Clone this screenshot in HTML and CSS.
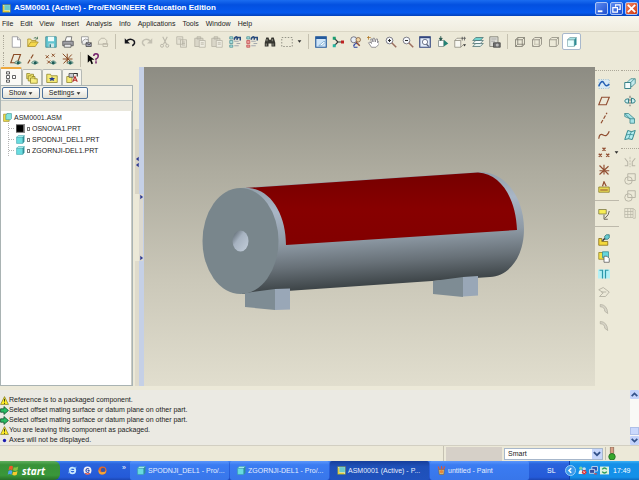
FILE: index.html
```html
<!DOCTYPE html>
<html lang="en">
<head>
    <meta charset="UTF-8">
    <meta name="viewport" content="width=device-width, initial-scale=1.0">
    <title>ASM0001 (Active) - Pro/ENGINEER Education Edition</title>
    <link rel="stylesheet" href="styles.css">
</head>
<body>
    <!-- icon sprite -->
    <svg class="sprite" aria-hidden="true">
        <symbol id="app" viewBox="0 0 16 16"><path d="M1 1h14v14H1z" fill="#e9f2c9" stroke="#4d6b48"/><path d="M4 2h10v9H4z" fill="#69c9cb"/><path d="M3 3v10h10" fill="none" stroke="#e2c832" stroke-width="2"/></symbol>
        <symbol id="new" viewBox="0 0 16 16"><path d="M3 1h7l4 4v10H3z" fill="#fff" stroke="#8d8d93"/><path d="M10 1v4h4" fill="#ddd" stroke="#8d8d93"/></symbol>
        <symbol id="open" viewBox="0 0 16 16"><path d="M1 14V4h4l1 2h6v3" fill="#f7e37c" stroke="#a58b24"/><path d="M1 14l4-6h10l-4 6z" fill="#f5d84c" stroke="#a58b24"/><path d="M9 3q3-3 5 1M14 1v3h-3" fill="none" stroke="#3e6e50"/></symbol>
        <symbol id="save" viewBox="0 0 16 16"><path d="M1 1h14v14H1z" fill="#63c5d0" stroke="#35808a"/><path d="M4 1h8v6H4z" fill="#eefcfc"/><path d="M5 10h7v5H5z" fill="#d3e7e8"/><path d="M6 11h2v4H6z" fill="#35808a"/></symbol>
        <symbol id="print" viewBox="0 0 16 16"><path d="M4 7l2-6h7l-1 6" fill="#fff" stroke="#555"/><path d="M1 7h14v6H1z" fill="#a0a0a6" stroke="#4c4c52"/><path d="M3 11h9v4H3z" fill="#e6e6e6" stroke="#555"/></symbol>
        <symbol id="mail" viewBox="0 0 16 16"><path d="M2 1h9v8H2z" fill="#fff" stroke="#888"/><path d="M3 7q4-5 8-2v6H3z" fill="#eee" stroke="#888"/><path d="M8 9h7v5H8z" fill="#a8a8bb" stroke="#444"/><path d="M8 9l4 3 3-3" fill="none" stroke="#444"/></symbol>
        <symbol id="mailoff" viewBox="0 0 16 16"><path d="M2 11V7q3-6 8-4l3 3v4M1 11h14M8 10h6v4H8z" fill="none" stroke="#bdb9aa" stroke-width="1.3"/></symbol>
        <symbol id="undo" viewBox="0 0 16 16"><path d="M3 7q5-5 10-1q3 4-2 7" fill="none" stroke="#15151c" stroke-width="2"/><path d="M1 3v7h7z" fill="#15151c"/></symbol>
        <symbol id="redo" viewBox="0 0 16 16"><path d="M13 7q-5-5-10-1q-3 4 2 7" fill="none" stroke="#c3c0b2" stroke-width="2"/><path d="M15 3v7H8z" fill="#c3c0b2"/></symbol>
        <symbol id="cut" viewBox="0 0 16 16"><path d="M5 1l5 10M11 1L6 11" stroke="#bab7aa" stroke-width="1.4"/><circle cx="4" cy="13" r="2" fill="none" stroke="#bab7aa" stroke-width="1.3"/><circle cx="11" cy="13" r="2" fill="none" stroke="#bab7aa" stroke-width="1.3"/></symbol>
        <symbol id="copy" viewBox="0 0 16 16"><path d="M1 1h8v10H1zM6 5h8v10H6z" fill="#e5e2d4" stroke="#b3b0a3"/><path d="M8 8h4M8 10h4M8 12h4M3 4h4" stroke="#b3b0a3"/></symbol>
        <symbol id="paste" viewBox="0 0 16 16"><path d="M1 3h11v11H1zM4 1h5v3H4z" fill="#d9d6c8" stroke="#b3b0a3"/><path d="M7 6h8v9H7z" fill="#efede2" stroke="#b3b0a3"/><path d="M9 9h4M9 11h4" stroke="#b3b0a3"/></symbol>
        <symbol id="regen" viewBox="0 0 16 16"><path d="M1 1h4v3H1zM1 6h4v4H1zM1 12h4v3H1z" fill="#a9dfdd" stroke="#4f9094"/><path d="M7 6q0-4 3-4v3l3-3M10 10h5M7 7h6M7 13h6" fill="none" stroke="#8b93a0"/><path d="M7 5q0-4 4-4M11 5V1M12 2h3v4" fill="none" stroke="#26497c" stroke-width="2"/></symbol>
        <symbol id="regenred" viewBox="0 0 16 16"><path d="M1 1h4v3H1z" fill="#a9dfdd" stroke="#4f9094"/><path d="M1 6h4v4H1zM1 12h4v3H1z" fill="#ee9c9c" stroke="#c25252"/><path d="M10 10h5M7 7h6M7 13h6" fill="none" stroke="#8b93a0"/><path d="M7 5q0-4 4-4M11 5V1M12 2h3v4" fill="none" stroke="#26497c" stroke-width="2"/></symbol>
        <symbol id="find" viewBox="0 0 16 16"><path d="M3 2h3l1 3h2l1-3h3l2 7v5h-5v-4H6v4H1V9z" fill="#35352f"/><path d="M3 10v3M12 10v3M4 4v3M11 4v3" stroke="#b5b5aa"/></symbol>
        <symbol id="selbox" viewBox="0 0 16 16"><path d="M1 2h14v12H1z" fill="none" stroke="#77756c" stroke-dasharray="2 2"/></symbol>
        <symbol id="repaint" viewBox="0 0 16 16"><path d="M1 1h14v14H1z" fill="#cfe5f8" stroke="#245a9c" stroke-width="1.5"/><path d="M1 1h14v3H1z" fill="#245a9c"/><path d="M5 13l7-6 2 1-5 5z" fill="#fff" stroke="#6ea4cd"/></symbol>
        <symbol id="spin" viewBox="0 0 16 16"><path d="M3 3l5 5-5 5M8 8h5" fill="none" stroke="#343434" stroke-width="1.5"/><path d="M1 1h4v4H1z" fill="#1b9e70"/><path d="M1 11h4v4H1z" fill="#25b5a0"/><path d="M12 6h4v4h-4z" fill="#bd2222"/></symbol>
        <symbol id="orient" viewBox="0 0 16 16"><circle cx="5" cy="5" r="4" fill="#e7eef5" stroke="#57576a"/><circle cx="11" cy="5" r="3" fill="#f1d4a2" stroke="#77553c"/><path d="M8 8l5 5" stroke="#8f4b35" stroke-width="2"/><path d="M5 14q0-4 4-4M5 15h5" fill="none" stroke="#2741a6" stroke-width="1.6"/></symbol>
        <symbol id="pan" viewBox="0 0 16 16"><path d="M6 15L2 9l2-1 2 2-1-6 2 0 1 4 0-5h2l1 5 1-4 2 0v5l2-2v4l-4 4z" fill="#fff" stroke="#77757c"/><path d="M0 2h5M2 0v5" stroke="#b07420"/></symbol>
        <symbol id="zoomin" viewBox="0 0 16 16"><circle cx="6" cy="6" r="4.5" fill="#f4f7fb" stroke="#5d5d6d"/><path d="M9 9l6 6" stroke="#9b6f5e" stroke-width="2"/><path d="M4 6h4M6 4v4" stroke="#222" stroke-width="1.3"/></symbol>
        <symbol id="zoomout" viewBox="0 0 16 16"><circle cx="6" cy="6" r="4.5" fill="#f4f7fb" stroke="#5d5d6d"/><path d="M9 9l6 6" stroke="#9b6f5e" stroke-width="2"/><path d="M4 6h4" stroke="#222" stroke-width="1.3"/></symbol>
        <symbol id="refit" viewBox="0 0 16 16"><path d="M1 1h14v14H1z" fill="#e4edf8" stroke="#33467d" stroke-width="1.5"/><path d="M1 1h14v2H1z" fill="#33467d"/><circle cx="8" cy="8" r="3.5" fill="#fff" stroke="#4d5670"/><path d="M10 11l3 3" stroke="#4d5670" stroke-width="1.5"/></symbol>
        <symbol id="reorient" viewBox="0 0 16 16"><path d="M2 6h7v8H2z" fill="#f8fbfb" stroke="#7b8784"/><path d="M5 0v6M3 3l2 3 2-3z" stroke="#24544c" fill="#24544c"/><path d="M9 5l6 5-6 4z" fill="#238174"/></symbol>
        <symbol id="views" viewBox="0 0 16 16"><path d="M1 6h8v9H1zM1 6l3-3h8M9 15l3-3" fill="#f8f8f2" stroke="#8a8779"/><path d="M11 1v5M14 1v5M10 3h6" stroke="#555"/><path d="M12 11h4l-2 3z" fill="#333"/></symbol>
        <symbol id="layers" viewBox="0 0 16 16"><path d="M1 14l4-4h10l-4 4z" fill="#e6f3f0" stroke="#4a6f70"/><path d="M1 10l4-4h10l-4 4z" fill="#f8fbfb" stroke="#4a6f70"/><path d="M1 6l4-4h10l-4 4z" fill="#72d3cf" stroke="#4a6f70"/></symbol>
        <symbol id="viewmgr" viewBox="0 0 16 16"><path d="M1 1h11v13H1z" fill="#dcdcd5" stroke="#77776c"/><path d="M3 4h7M3 7h5" stroke="#999"/><path d="M6 9h9v6H6z" fill="#707070" stroke="#444"/><circle cx="11" cy="12" r="2" fill="#bbb"/></symbol>
        <symbol id="wire" viewBox="0 0 16 16"><path d="M2 5h9v9H2zM5 2h9v9H5zM2 5l3-3M11 5l3-3M2 14l3-3M11 14l3-3" fill="none" stroke="#77746a"/></symbol>
        <symbol id="hidden" viewBox="0 0 16 16"><path d="M2 5h9v9H2zM2 5l3-3h9v9l-3 3M11 5l3-3" fill="none" stroke="#817e74"/><path d="M5 4v7h7M2 14l3-3" fill="none" stroke="#b9b5a8"/></symbol>
        <symbol id="nohidden" viewBox="0 0 16 16"><path d="M2 5h9v9H2zM2 5l3-3h9v9l-3 3M11 5l3-3" fill="none" stroke="#8c897e"/></symbol>
        <symbol id="shade" viewBox="0 0 16 16"><path d="M2 5h9v9H2z" fill="#e8ffff" stroke="#8eb0b6"/><path d="M2 5l3-3h9l-3 3z" fill="#a9e4e6" stroke="#79a3a8"/><path d="M11 5l3-3v9l-3 3z" fill="#2d8c93"/></symbol>
        <symbol id="part" viewBox="0 0 16 16"><path d="M1 4h11v11H1z" fill="#68dce0" stroke="#3aa0a8"/><path d="M1 4l3-3h11l-3 3z" fill="#b9f7f7" stroke="#3aa0a8"/><path d="M12 4l3-3v11l-3 3z" fill="#2e929a"/></symbol>
        <symbol id="partblack" viewBox="0 0 16 16"><path d="M0 0h16v16H0z" fill="#8b8b8b"/><path d="M1 2h12v12H1z" fill="#000"/></symbol>
        <symbol id="assembly" viewBox="0 0 16 16"><path d="M1 2h10v13H1z" fill="#f3dd45" stroke="#8d7f21"/><path d="M5 4l2-3h8v9l-2 2H5z" fill="#85e4dd" stroke="#348a8e"/></symbol>
        <symbol id="dplane" viewBox="0 0 16 16"><path d="M1 13L5 2h9l-4 11z" fill="none" stroke="#8a4b25" stroke-width="1.5"/><path d="M6 13q4-5 9 0q-5 4-9 0" fill="#c5dfd5" stroke="#40776a"/><circle cx="11" cy="13" r="2" fill="#1c5a55"/></symbol>
        <symbol id="daxis" viewBox="0 0 16 16"><path d="M1 14L9 1" stroke="#8a4b25" stroke-width="1.5" stroke-dasharray="6 2"/><path d="M6 13q4-5 9 0q-5 4-9 0" fill="#c5dfd5" stroke="#40776a"/><circle cx="11" cy="13" r="2" fill="#1c5a55"/></symbol>
        <symbol id="dpoint" viewBox="0 0 16 16"><path d="M1 3l4 4M5 3L1 7M9 1l4 4M13 1L9 5M3 10l4 4M7 10l-4 4" stroke="#8a4b25" stroke-width="1.3"/><path d="M7 13q4-5 8 0q-4 4-8 0" fill="#c5dfd5" stroke="#40776a"/><circle cx="11" cy="13" r="2" fill="#1c5a55"/></symbol>
        <symbol id="dcsys" viewBox="0 0 16 16"><path d="M1 1l12 12M13 2L2 14M7 1v13M1 8h13" stroke="#8a4b25" stroke-width="1.3"/><path d="M7 13q4-5 8 0q-4 4-8 0" fill="#c5dfd5" stroke="#40776a"/><circle cx="11" cy="13" r="2" fill="#1c5a55"/></symbol>
        <symbol id="help" viewBox="0 0 16 16"><path d="M1 2v11l3-3 2 5 2-1-2-5h4z" fill="#000"/><path d="M9 4q0-3 3-3t3 3-3 4v2M12 11v3" fill="none" stroke="#74206d" stroke-width="2"/></symbol>
        <symbol id="tree" viewBox="0 0 16 16"><path d="M2 1h4v3H2zM2 6h4v4H2zM2 12h4v3H2zM10 6h4v4h-4z" fill="#fff" stroke="#333"/></symbol>
        <symbol id="folders" viewBox="0 0 16 16"><path d="M1 2h4l1 1h4v6H1z" fill="#efe36a" stroke="#8c8128"/><path d="M3 5h4l1 1h4v6H3z" fill="#efe36a" stroke="#8c8128"/><path d="M6 8h4l1 1h4v6H6z" fill="#f6ed82" stroke="#8c8128"/></symbol>
        <symbol id="favorite" viewBox="0 0 16 16"><path d="M1 3h5l1 2h8v9H1z" fill="#f5ea76" stroke="#8c8128"/><path d="M8 6l1 2h3l-2 2 1 2-3-1-3 1 1-2-2-2h3z" fill="#223a91"/></symbol>
        <symbol id="connect" viewBox="0 0 16 16"><path d="M1 6h7v8H1z" fill="#f5ea76" stroke="#8c8128"/><path d="M4 2h6v5H4z" fill="#c9ccd4" stroke="#444"/><path d="M9 13l3-7 3 7M10 11h4" fill="none" stroke="#b32323" stroke-width="1.4"/><path d="M10 2h5v4" fill="none" stroke="#333" stroke-width="1.5"/></symbol>
        <symbol id="sketch" viewBox="0 0 16 16"><path d="M1 2h14v12H1z" fill="#d7e9f4" stroke="#7da9c8" stroke-dasharray="1 2"/><path d="M1 11q4-10 7-4t7 1" fill="none" stroke="#2460b4" stroke-width="2"/></symbol>
        <symbol id="plane" viewBox="0 0 16 16"><path d="M1 13L5 3h10l-4 10z" fill="none" stroke="#914e31" stroke-width="1.5"/></symbol>
        <symbol id="axis" viewBox="0 0 16 16"><path d="M4 15L12 1" stroke="#914e31" stroke-width="1.6" stroke-dasharray="5 2"/></symbol>
        <symbol id="curve" viewBox="0 0 16 16"><path d="M1 13q1-8 6-5t8-5" fill="none" stroke="#914e31" stroke-width="1.6"/></symbol>
        <symbol id="points" viewBox="0 0 16 16"><path d="M6 1l4 4M10 1L6 5M1 9l4 4M5 9l-4 4M11 9l4 4M15 9l-4 4" stroke="#914e31" stroke-width="1.8"/></symbol>
        <symbol id="csys" viewBox="0 0 16 16"><path d="M2 2l12 12M14 3L2 14M8 1v13M2 9h13" stroke="#914e31" stroke-width="1.5"/></symbol>
        <symbol id="analysis" viewBox="0 0 16 16"><path d="M1 8h14v7H1z" fill="#e7d956" stroke="#86792a"/><path d="M6 7l2-6 3 6M3 12h10" fill="none" stroke="#914e31" stroke-width="1.6"/></symbol>
        <symbol id="note" viewBox="0 0 16 16"><path d="M1 2h10v6H1z" fill="#f7ed55" stroke="#777442"/><path d="M15 4q0 5-6 10M8 9v6h5" fill="none" stroke="#6a6557" stroke-width="1.3"/></symbol>
        <symbol id="assemble" viewBox="0 0 16 16"><path d="M1 6h4v4h8v5H1z" fill="#f4d83a" stroke="#806713"/><path d="M9 3l2-2h4v4l-2 2H9z" fill="#69cbd0" stroke="#2a7278"/><path d="M6 9l3-3" stroke="#333" stroke-width="2"/></symbol>
        <symbol id="create" viewBox="0 0 16 16"><path d="M1 2h9v9H1z" fill="#f4df45" stroke="#8b7d25"/><path d="M6 1h8v8H6z" fill="#66d6dc" stroke="#358d95"/><path d="M8 7h4l3 3v5H8z" fill="#fff" stroke="#555"/></symbol>
        <symbol id="hole" viewBox="0 0 16 16"><path d="M0 2h16v12H0z" fill="#b4f0f5"/><path d="M2 3h4v11M14 3h-4v11" fill="none" stroke="#2a98aa" stroke-width="1.6"/></symbol>
        <symbol id="shell" viewBox="0 0 16 16"><path d="M1 5l6-3 8 6-5 6H2l5-5zM4 8h7" fill="none" stroke="#b8b5a7" stroke-width="1.3"/></symbol>
        <symbol id="round" viewBox="0 0 16 16"><path d="M3 2q9 0 10 12l-4-3Q9 5 3 5z" fill="#d8d5c8" stroke="#b0ad9f"/></symbol>
        <symbol id="extrude" viewBox="0 0 16 16"><path d="M5 5l4-4h6v6l-5 5z" fill="#c4eaec" stroke="#338086"/><path d="M1 6h8v8H1z" fill="#f4fbfb" stroke="#338086" stroke-width="1.3"/><path d="M9 6l5-5" stroke="#338086"/></symbol>
        <symbol id="revolve" viewBox="0 0 16 16"><path d="M8 1v14" stroke="#444" stroke-dasharray="3 1"/><path d="M6 5Q1 5 1 8t5 3zM10 4q5 1 5 4t-5 3z" fill="#cdeff1" stroke="#338086" stroke-width="1.3"/></symbol>
        <symbol id="blend" viewBox="0 0 16 16"><path d="M1 2h5l8 7v6H8V9L1 6z" fill="#a4e2e6" stroke="#338086"/><path d="M8 9h6M1 2l7 7" stroke="#338086"/></symbol>
        <symbol id="boundary" viewBox="0 0 16 16"><path d="M5 2q5 3 10 0l-4 12q-5-2-10 0z" fill="#b2edf0" stroke="#31878d" stroke-width="1.3"/><path d="M10 3L6 13M3 8q5-2 10 0" fill="none" stroke="#31878d"/></symbol>
        <symbol id="mirror" viewBox="0 0 16 16"><path d="M8 1v14" stroke="#b8b5a7" stroke-dasharray="3 1"/><path d="M1 3l4 5v5H1M15 3l-4 5v5h4" fill="none" stroke="#b8b5a7" stroke-width="1.4"/></symbol>
        <symbol id="merge" viewBox="0 0 16 16"><path d="M5 1h10v9H5z" fill="none" stroke="#b8b5a7" stroke-width="1.3"/><circle cx="6" cy="10" r="5" fill="none" stroke="#b8b5a7" stroke-width="1.3"/></symbol>
        <symbol id="pattern" viewBox="0 0 16 16"><path d="M1 2h11v12H1zM1 6h11M1 10h11M5 2v12M9 2v12M12 2l3 2v11h-3" fill="none" stroke="#b8b5a7"/></symbol>
        <symbol id="warn" viewBox="0 0 16 16"><path d="M8 1l7 14H1z" fill="#ffee29" stroke="#64600f"/><path d="M8 5v5M8 12v2" stroke="#222" stroke-width="1.6"/></symbol>
        <symbol id="prompt" viewBox="0 0 16 16"><path d="M1 5h6V1l8 7-8 7v-4H1z" fill="#29bd62" stroke="#104c2b" stroke-width="1.4"/></symbol>
        <symbol id="dot" viewBox="0 0 16 16"><circle cx="8" cy="8" r="3" fill="#1b1bb0"/></symbol>
        <symbol id="flag" viewBox="0 0 16 16"><path d="M3 2q3-2 5 0L7 7Q4 5 2 7z" fill="#f0592a"/><path d="M9 3q3 1 6-1l-1 5q-3 2-6 0z" fill="#84c440"/><path d="M2 8q3-2 5 0l-1 5q-3-2-5 0z" fill="#4fa3ef"/><path d="M8 9q3 1 6-1l-1 5q-3 2-6 0z" fill="#f8c92e"/></symbol>
        <symbol id="ie" viewBox="0 0 16 16"><circle cx="8" cy="8" r="5" fill="none" stroke="#cdeaff" stroke-width="3"/><path d="M4 8h9" stroke="#cdeaff" stroke-width="2"/><path d="M1 13Q3 4 15 2" fill="none" stroke="#8ac8f5" stroke-width="1.5"/></symbol>
        <symbol id="google" viewBox="0 0 16 16"><circle cx="8" cy="8" r="7" fill="#f3f1f6"/><path d="M11 6q-3-3-5 0t1 5 4-3H8" fill="none" stroke="#3452af" stroke-width="1.8"/><path d="M4 13q4 3 8 0" stroke="#d8483c" fill="none" stroke-width="2"/></symbol>
        <symbol id="firefox" viewBox="0 0 16 16"><circle cx="8" cy="8" r="7" fill="#e6692a"/><circle cx="9" cy="7" r="4" fill="#3b57a7"/><path d="M1 6q3 7 8 4 4 2 6-3-1 8-8 8T1 6" fill="#f4a635"/></symbol>
        <symbol id="paint" viewBox="0 0 16 16"><path d="M3 6h10l-1 9H4z" fill="#d8bd7a" stroke="#7b5c2c"/><path d="M4 6L2 1M8 6V0M11 6l3-5" stroke="#d95739" stroke-width="2"/><circle cx="8" cy="10" r="3" fill="#e5853b"/></symbol>
        <symbol id="people" viewBox="0 0 16 16"><circle cx="5" cy="4" r="3" fill="#7dd5a5"/><path d="M1 14q0-7 4-7t4 7z" fill="#e8f2ef"/><circle cx="11" cy="5" r="3" fill="#c7dced"/><circle cx="11" cy="11" r="4" fill="#da2d32"/><path d="M9 9l4 4M13 9l-4 4" stroke="#fff"/></symbol>
        <symbol id="net" viewBox="0 0 16 16"><path d="M5 1h10v8H5z" fill="#244eac" stroke="#d7e2f2" stroke-width="1.5"/><path d="M1 6h9v7H1z" fill="#324c9b" stroke="#d7e2f2" stroke-width="1.5"/><path d="M9 14h5" stroke="#e23d39" stroke-width="2"/></symbol>
        <symbol id="shield" viewBox="0 0 16 16"><path d="M0 1h16v14H0z" fill="#dcf2df"/><path d="M4 6q4-5 8 0M12 10q-4 5-8 0" fill="none" stroke="#2a9b57" stroke-width="2.5"/></symbol>
        <symbol id="up" viewBox="0 0 16 16"><path d="M3 11l5-5 5 5" fill="none" stroke="#33528b" stroke-width="3"/></symbol>
        <symbol id="down" viewBox="0 0 16 16"><path d="M3 5l5 5 5-5" fill="none" stroke="#33528b" stroke-width="3"/></symbol>
        <symbol id="left" viewBox="0 0 16 16"><path d="M12 1L3 8l9 7z" fill="#2e3a92"/></symbol>
        <symbol id="right" viewBox="0 0 16 16"><path d="M4 1l9 7-9 7z" fill="#2e3a92"/></symbol>
        <symbol id="caret" viewBox="0 0 16 16"><path d="M2 4h12l-6 8z" fill="#2c2c2c"/></symbol>
        <symbol id="lamp" viewBox="0 0 10 16"><path d="M3 0h4v8H3z" fill="#d89f85" stroke="#8f6d59"/><circle cx="5" cy="12" r="4" fill="#36a82c" stroke="#206a20"/></symbol>
    </svg>

    <header class="titlebar">
        <svg class="icon"><use href="#app"/></svg>
        <h1>ASM0001 (Active) - Pro/ENGINEER Education Edition</h1>
        <div class="window-buttons">
            <button aria-label="Minimize"><svg viewBox="0 0 12 12"><path d="M2 9h5" stroke="#fff" stroke-width="2"/></svg></button>
            <button aria-label="Restore"><svg viewBox="0 0 12 12"><path d="M5 4V2h5v5H8M2 5h5v5H2z" fill="none" stroke="#fff" stroke-width="1.3"/></svg></button>
            <button class="close" aria-label="Close"><svg viewBox="0 0 12 12"><path d="M2 2l8 8M10 2l-8 8" stroke="#fff" stroke-width="2"/></svg></button>
        </div>
    </header>

    <nav class="menubar">
        <button>File</button>
        <button>Edit</button>
        <button>View</button>
        <button>Insert</button>
        <button>Analysis</button>
        <button>Info</button>
        <button>Applications</button>
        <button>Tools</button>
        <button>Window</button>
        <button>Help</button>
    </nav>

    <div class="toolbars">
        <div class="toolbar">
            <div class="group group-file">
                <button aria-label="New"><svg class="icon"><use href="#new"/></svg></button>
                <button aria-label="Open"><svg class="icon"><use href="#open"/></svg></button>
                <button aria-label="Save"><svg class="icon"><use href="#save"/></svg></button>
                <button aria-label="Print"><svg class="icon"><use href="#print"/></svg></button>
                <button aria-label="Mail"><svg class="icon"><use href="#mail"/></svg></button>
                <button aria-label="Mail link" disabled><svg class="icon"><use href="#mailoff"/></svg></button>
            </div>
            <span class="divider"></span>
            <div class="group group-edit">
                <button aria-label="Undo"><svg class="icon"><use href="#undo"/></svg></button>
                <button aria-label="Redo" disabled><svg class="icon"><use href="#redo"/></svg></button>
                <button aria-label="Cut" disabled><svg class="icon"><use href="#cut"/></svg></button>
                <button aria-label="Copy" disabled><svg class="icon"><use href="#copy"/></svg></button>
                <button aria-label="Paste" disabled><svg class="icon"><use href="#paste"/></svg></button>
                <button aria-label="Paste special" disabled><svg class="icon"><use href="#paste"/></svg></button>
                <button aria-label="Regenerate"><svg class="icon"><use href="#regen"/></svg></button>
                <button aria-label="Regenerate manager"><svg class="icon"><use href="#regenred"/></svg></button>
                <button aria-label="Find"><svg class="icon"><use href="#find"/></svg></button>
                <button aria-label="Select box"><svg class="icon"><use href="#selbox"/></svg></button>
            </div>
            <button class="drop" aria-label="Select options"><svg class="caret"><use href="#caret"/></svg></button>
            <span class="divider"></span>
            <div class="group group-view">
                <button aria-label="Repaint"><svg class="icon"><use href="#repaint"/></svg></button>
                <button aria-label="Spin center"><svg class="icon"><use href="#spin"/></svg></button>
                <button aria-label="Orient mode"><svg class="icon"><use href="#orient"/></svg></button>
                <button aria-label="Pan"><svg class="icon"><use href="#pan"/></svg></button>
                <button aria-label="Zoom in"><svg class="icon"><use href="#zoomin"/></svg></button>
                <button aria-label="Zoom out"><svg class="icon"><use href="#zoomout"/></svg></button>
                <button aria-label="Refit"><svg class="icon"><use href="#refit"/></svg></button>
                <button aria-label="Reorient"><svg class="icon"><use href="#reorient"/></svg></button>
                <button aria-label="Saved views"><svg class="icon"><use href="#views"/></svg></button>
                <button aria-label="Layers"><svg class="icon"><use href="#layers"/></svg></button>
                <button aria-label="View manager"><svg class="icon"><use href="#viewmgr"/></svg></button>
            </div>
            <span class="divider"></span>
            <div class="group group-display">
                <button aria-label="Wireframe"><svg class="icon"><use href="#wire"/></svg></button>
                <button aria-label="Hidden line"><svg class="icon"><use href="#hidden"/></svg></button>
                <button aria-label="No hidden"><svg class="icon"><use href="#nohidden"/></svg></button>
                <button class="pressed" aria-label="Shading"><svg class="icon"><use href="#shade"/></svg></button>
            </div>
        </div>
        <div class="toolbar second">
            <div class="group group-datum">
                <button aria-label="Planes"><svg class="icon"><use href="#dplane"/></svg></button>
                <button aria-label="Axes"><svg class="icon"><use href="#daxis"/></svg></button>
                <button aria-label="Points"><svg class="icon"><use href="#dpoint"/></svg></button>
                <button aria-label="Coordinate systems"><svg class="icon"><use href="#dcsys"/></svg></button>
            </div>
            <span class="divider"></span>
            <div class="group group-help">
                <button aria-label="Context help"><svg class="icon"><use href="#help"/></svg></button>
            </div>
        </div>
    </div>

    <main class="workspace">
        <aside class="navigator">
            <div class="tabs">
                <button class="active" aria-label="Model tree"><svg class="icon"><use href="#tree"/></svg></button>
                <button aria-label="Folders"><svg class="icon"><use href="#folders"/></svg></button>
                <button aria-label="Favorites"><svg class="icon"><use href="#favorite"/></svg></button>
                <button aria-label="Connections"><svg class="icon"><use href="#connect"/></svg></button>
            </div>
            <div class="panel">
                <div class="panel-buttons">
                    <button>Show <svg class="caret"><use href="#caret"/></svg></button>
                    <button class="wide">Settings <svg class="caret"><use href="#caret"/></svg></button>
                </div>
                <div class="tree-head"></div>
                <div class="tree">
                    <div class="node"><svg class="node-icon"><use href="#assembly"/></svg>ASM0001.ASM</div>
                    <ul>
                        <li class="node"><svg class="node-icon"><use href="#partblack"/></svg><i></i>OSNOVA1.PRT</li>
                        <li class="node"><svg class="node-icon"><use href="#part"/></svg><i></i>SPODNJI_DEL1.PRT</li>
                        <li class="node"><svg class="node-icon"><use href="#part"/></svg><i></i>ZGORNJI-DEL1.PRT</li>
                    </ul>
                </div>
            </div>
        </aside>

        <div class="sash sash-left">
            <button aria-label="Collapse navigator"><svg><use href="#left"/></svg><svg><use href="#left"/></svg></button>
            <span></span>
        </div>
        <div class="sash sash-right">
            <button aria-label="Expand browser"><svg><use href="#right"/></svg><svg><use href="#right"/></svg></button>
        </div>

        <div class="viewport">
            <svg viewBox="144 67 451 319" preserveAspectRatio="xMidYMid meet">
                <defs>
                    <linearGradient id="steel" gradientUnits="userSpaceOnUse" x1="362" y1="180" x2="369" y2="286">
                        <stop offset="0" stop-color="#93a0ab"/>
                        <stop offset="0.25" stop-color="#a9b6c6"/>
                        <stop offset="0.55" stop-color="#8e9aa5"/>
                        <stop offset="0.78" stop-color="#687178"/>
                        <stop offset="1" stop-color="#3c4346"/>
                    </linearGradient>
                    <linearGradient id="red" x1="0" y1="0" x2="0" y2="1">
                        <stop offset="0" stop-color="#760000"/>
                        <stop offset="0.5" stop-color="#870000"/>
                        <stop offset="1" stop-color="#820000"/>
                    </linearGradient>
                    <linearGradient id="bore" x1="0" y1="0" x2="1" y2="1">
                        <stop offset="0.1" stop-color="#66717a"/>
                        <stop offset="0.4" stop-color="#a6b2c0"/>
                        <stop offset="1" stop-color="#c3ceda"/>
                    </linearGradient>
                </defs>
                <path d="M240 188L480 172C506 172 524 198 524 229C524 257 509 276 490 277L242 294Z" fill="url(#steel)"/>
                <path d="M245 188L478 172.5C502 174 516 200 517 230L286 245C286 216 272 190 249 188Z" fill="url(#red)"/>
                <path d="M245 293l30-4v21l-30-3z" fill="#7e8c94"/>
                <path d="M275 289l15-.5v21l-15 .5z" fill="#99a7b7"/>
                <path d="M433 281l30-4v20l-30-3z" fill="#7e8c94"/>
                <path d="M463 277l15-1v19.5l-15 1z" fill="#99a7b7"/>
                <ellipse cx="240.5" cy="241" rx="38" ry="53" fill="#79868c"/>
                <ellipse cx="240.5" cy="241" rx="8" ry="10.5" fill="url(#bore)"/>
            </svg>
        </div>

        <div class="features">
            <div class="feature-column">
                <div class="vgroup seven">
                    <button aria-label="Sketch"><svg class="icon"><use href="#sketch"/></svg></button>
                    <button aria-label="Datum plane"><svg class="icon"><use href="#plane"/></svg></button>
                    <button aria-label="Datum axis"><svg class="icon"><use href="#axis"/></svg></button>
                    <button aria-label="Datum curve"><svg class="icon"><use href="#curve"/></svg></button>
                    <button class="has-menu" aria-label="Datum point"><svg class="icon"><use href="#points"/></svg><svg class="caret"><use href="#caret"/></svg></button>
                    <button aria-label="Coordinate system"><svg class="icon"><use href="#csys"/></svg></button>
                    <button aria-label="Analysis feature"><svg class="icon"><use href="#analysis"/></svg></button>
                </div>
                <div class="vgroup one">
                    <button aria-label="Annotation"><svg class="icon"><use href="#note"/></svg></button>
                </div>
                <div class="vgroup six">
                    <button aria-label="Assemble component"><svg class="icon"><use href="#assemble"/></svg></button>
                    <button aria-label="Create component"><svg class="icon"><use href="#create"/></svg></button>
                    <button aria-label="Hole"><svg class="icon"><use href="#hole"/></svg></button>
                    <button aria-label="Shell" disabled><svg class="icon"><use href="#shell"/></svg></button>
                    <button aria-label="Round" disabled><svg class="icon"><use href="#round"/></svg></button>
                    <button aria-label="Chamfer" disabled><svg class="icon"><use href="#round"/></svg></button>
                </div>
            </div>
            <div class="feature-column">
                <div class="vgroup four">
                    <button aria-label="Extrude"><svg class="icon"><use href="#extrude"/></svg></button>
                    <button aria-label="Revolve"><svg class="icon"><use href="#revolve"/></svg></button>
                    <button aria-label="Variable section sweep"><svg class="icon"><use href="#blend"/></svg></button>
                    <button aria-label="Boundary blend"><svg class="icon"><use href="#boundary"/></svg></button>
                </div>
                <div class="vgroup four">
                    <button aria-label="Mirror" disabled><svg class="icon"><use href="#mirror"/></svg></button>
                    <button aria-label="Merge" disabled><svg class="icon"><use href="#merge"/></svg></button>
                    <button aria-label="Trim" disabled><svg class="icon"><use href="#merge"/></svg></button>
                    <button aria-label="Pattern" disabled><svg class="icon"><use href="#pattern"/></svg></button>
                </div>
            </div>
        </div>
    </main>

    <section class="messages">
        <ul>
            <li><svg class="msg-icon"><use href="#warn"/></svg>Reference is to a packaged component.</li>
            <li><svg class="msg-icon"><use href="#prompt"/></svg>Select offset mating surface or datum plane on other part.</li>
            <li><svg class="msg-icon"><use href="#prompt"/></svg>Select offset mating surface or datum plane on other part.</li>
            <li><svg class="msg-icon"><use href="#warn"/></svg>You are leaving this component as packaged.</li>
            <li><svg class="msg-icon"><use href="#dot"/></svg>Axes will not be displayed.</li>
        </ul>
        <div class="scrollbar">
            <button aria-label="Scroll up"><svg><use href="#up"/></svg></button>
            <span class="thumb"></span>
            <button aria-label="Scroll down"><svg><use href="#down"/></svg></button>
        </div>
    </section>

    <div class="statusbar">
        <div class="status-text"></div>
        <div class="status-count"></div>
        <div class="filter">
            <select aria-label="Selection filter"><option>Smart</option></select>
            <svg><use href="#down"/></svg>
        </div>
        <div class="status-lamp"><svg><use href="#lamp"/></svg></div>
    </div>

    <footer class="taskbar">
        <button class="start"><svg><use href="#flag"/></svg>start</button>
        <div class="quick">
            <button aria-label="Internet Explorer"><svg><use href="#ie"/></svg></button>
            <button aria-label="Google"><svg><use href="#google"/></svg></button>
            <button aria-label="Firefox"><svg><use href="#firefox"/></svg></button>
            <button class="more" aria-label="More">»</button>
        </div>
        <div class="tasks">
            <button><svg><use href="#part"/></svg>SPODNJI_DEL1 - Pro/...</button>
            <button><svg><use href="#part"/></svg>ZGORNJI-DEL1 - Pro/...</button>
            <button class="active"><svg><use href="#app"/></svg>ASM0001 (Active) - P...</button>
            <button><svg><use href="#paint"/></svg>untitled - Paint</button>
        </div>
        <div class="lang">SL</div>
        <div class="tray">
            <button class="expand" aria-label="Show hidden icons"><svg viewBox="0 0 12 12"><path d="M7 3L4 6l3 3" fill="none" stroke="#fff" stroke-width="2"/></svg></button>
            <svg><use href="#people"/></svg>
            <svg><use href="#net"/></svg>
            <svg><use href="#shield"/></svg>
            <time>17:49</time>
        </div>
    </footer>
</body>
</html>
```

FILE: styles.css
```css
* {
    box-sizing: border-box;
}
body {
    margin: 0;
    height: 100vh;
    display: flex;
    flex-direction: column;
    overflow: hidden;
    background-color: #ece9d8;
    color: #222;
    font-family: "Liberation Sans", Arial, sans-serif;
    font-size: 7px;
    line-height: 10px;
}
button, select {
    margin: 0;
    padding: 0;
    border: 0;
    background: none;
    color: inherit;
    font: inherit;
}
ul {
    list-style: none;
    margin: 0;
    padding: 0;
}
svg {
    display: block;
    flex: none;
}
.sprite {
    position: absolute;
    width: 0;
    height: 0;
}
.icon {
    width: 12px;
    height: 12px;
}
.caret {
    width: 5px;
    height: 5px;
}

/* title bar */
.titlebar {
    display: flex;
    align-items: center;
    height: 16px;
    flex: none;
    padding: 0 1px 0 2px;
    gap: 3px;
    background: linear-gradient(#1b6df0, #0350e0 30%, #0559ee 80%, #0340b8);
    color: #fff;
}
.titlebar .icon {
    width: 9px;
    height: 9px;
}
.titlebar h1 {
    flex: 1;
    margin: 0;
    font-size: 8px;
    font-weight: bold;
}
.window-buttons {
    display: flex;
    gap: 2px;
}
.window-buttons button {
    width: 13px;
    height: 13px;
    border: 1px solid #a9c3f5;
    border-radius: 2px;
    background: linear-gradient(135deg, #5c8cf2, #1f50cf);
}
.window-buttons .close {
    background: linear-gradient(135deg, #ee8463, #cf3710);
}

/* menu */
.menubar {
    display: flex;
    align-items: center;
    flex: none;
    height: 15px;
    padding: 0 2px;
    gap: 7px;
    background: linear-gradient(#f7f6ee, #f0eddf);
}

/* toolbars */
.toolbars {
    flex: none;
    border-top: 1px solid #dad6c5;
}
.toolbar {
    display: flex;
    align-items: center;
    height: 19px;
    padding-left: 3px;
}
.toolbar::before {
    content: "";
    height: 14px;
    border-left: 1px dotted #aca899;
}
.toolbar.second {
    height: 16px;
}
.group {
    display: flex;
    align-items: center;
    margin: 0 3px;
}
.group button {
    flex: 1;
    height: 17px;
    display: flex;
    align-items: center;
    justify-content: center;
}
.group-file {
    width: 105px;
}
.group-edit {
    width: 175px;
    margin-left: 5px;
    margin-right: 0;
}
.group-view {
    width: 192px;
}
.group-display {
    width: 70px;
}
.group-datum {
    width: 70px;
}
.group-help {
    width: 18px;
}
.group .pressed {
    border: 1px solid #a8b8cc;
    border-radius: 2px;
    background-color: #fff;
}
.divider {
    height: 15px;
    border-left: 1px solid #c5c1b0;
}
.drop {
    width: 12px;
    padding-left: 1px;
}

/* work area */
.workspace {
    flex: 1;
    min-height: 0;
    display: flex;
    margin-bottom: 4px;
}
.navigator {
    width: 133px;
    flex: none;
    display: flex;
    flex-direction: column;
}
.tabs {
    display: flex;
    height: 18px;
    flex: none;
}
.tabs button {
    width: 20px;
    margin-top: 2px;
    display: flex;
    align-items: center;
    justify-content: center;
    border: 1px solid #b5b9b5;
    border-bottom: 0;
    border-radius: 2px 2px 0 0;
    background-color: #f6f5ee;
}
.tabs .active {
    width: 22px;
    margin-top: 0;
    border-top: 2px solid #eda93f;
    background-color: #fbfaf6;
}
.panel {
    flex: 1;
    display: flex;
    flex-direction: column;
    border: 1px solid #a9b3b3;
}
.panel-buttons {
    display: flex;
    align-items: center;
    gap: 2px;
    height: 14px;
    padding: 0 1px;
    background-color: #f1efe4;
}
.panel-buttons button {
    display: flex;
    align-items: center;
    justify-content: center;
    gap: 2px;
    width: 38px;
    height: 12px;
    border: 1px solid #51739b;
    border-radius: 2px;
    background: linear-gradient(#fff, #e4e1d5);
}
.panel-buttons .wide {
    width: 46px;
}
.tree-head {
    height: 11px;
    border-top: 1px solid #c2c9c6;
    background-color: #e9e7dc;
}
.tree {
    flex: 1;
    padding: 1px 2px;
    border-right: 1px solid #c9cbc4;
    background-color: #fff;
}
.node {
    display: flex;
    align-items: center;
    gap: 2px;
    height: 11px;
}
.node-icon {
    width: 9px;
    height: 9px;
}
.node i {
    width: 3px;
    height: 4px;
    border: 1px solid #777;
}
.tree ul {
    margin-left: 5px;
    border-left: 1px dotted #b5b5b5;
}
.tree li::before {
    content: "";
    width: 5px;
    border-top: 1px dotted #b5b5b5;
}

/* sashes beside the navigator */
.sash {
    flex: none;
    display: flex;
    flex-direction: column;
}
.sash button {
    flex: none;
    display: flex;
    flex-direction: column;
    align-items: center;
    width: 4px;
}
.sash svg {
    width: 5px;
    height: 6px;
}
.sash-left {
    width: 6px;
    align-items: flex-end;
    padding-top: 62px;
}
.sash-left button {
    height: 65px;
    justify-content: center;
    background-color: #d9d5c6;
}
.sash-left span {
    width: 4px;
    flex: 1;
    margin-top: 67px;
    background-color: #dfdbcc;
}
.sash-right {
    width: 5px;
    padding-top: 127px;
    background-color: #c5d0e6;
}
.sash-right button {
    height: 67px;
    justify-content: space-between;
    background-color: #dcd9d0;
}

/* model view */
.viewport {
    flex: 1;
    min-width: 0;
    background: linear-gradient(#8d8c83, #aeac9f 33%, #cbc8b9 67%, #e1dece);
}
.viewport svg {
    width: 100%;
    height: 100%;
}

/* feature toolbar */
.features {
    flex: none;
    display: grid;
    grid-template-columns: 26px 18px;
    align-items: start;
}
.feature-column {
    padding-top: 3px;
}
.vgroup {
    display: flex;
    flex-direction: column;
    width: 18px;
    padding: 4px 0;
    border-top: 1px dotted #aca899;
}
.vgroup button {
    flex: 1;
    display: flex;
    align-items: center;
    justify-content: center;
}
.vgroup .has-menu {
    gap: 4px;
    margin-right: -9px;
}
.feature-column:first-child .vgroup {
    width: 24px;
    padding-right: 6px;
}
.one, .six {
    border-top: 1px solid #bdb9ab;
}
.seven {
    height: 130px;
}
.one {
    height: 26px;
}
.six {
    height: 113px;
}
.four {
    height: 78px;
}

/* message log */
.messages {
    flex: none;
    display: flex;
    height: 56px;
    border-bottom: 1px solid #d2cfc2;
    background-color: #ebeae3;
}
.messages ul {
    flex: 1;
    padding-top: 5px;
}
.messages li {
    display: flex;
    align-items: center;
    height: 10px;
}
.msg-icon {
    width: 9px;
    height: 9px;
}
.scrollbar {
    width: 9px;
    display: flex;
    flex-direction: column;
    background-color: #f9f9f6;
}
.scrollbar button {
    height: 9px;
    border-radius: 1px;
    background-color: #c3d3fb;
}
.scrollbar svg {
    width: 9px;
    height: 9px;
}
.scrollbar .thumb {
    height: 8px;
    margin: auto 0 1px;
    border: 1px solid #aebfe8;
    background-color: #c9d8fc;
}

/* status line */
.statusbar {
    flex: none;
    display: flex;
    align-items: center;
    gap: 2px;
    height: 15px;
}
.status-text {
    flex: 1;
    height: 15px;
    border-right: 1px solid #c5c1b2;
}
.status-count {
    width: 56px;
    height: 14px;
    background-color: #d6d0c8;
}
.filter {
    position: relative;
    width: 99px;
    height: 12px;
}
.filter select {
    appearance: none;
    display: block;
    width: 100%;
    height: 12px;
    padding-left: 3px;
    border: 1px solid #a7b7cb;
    background-color: #fff;
}
.filter svg {
    position: absolute;
    top: 1px;
    right: 1px;
    width: 10px;
    height: 10px;
    background-color: #c6d6fb;
    pointer-events: none;
}
.status-lamp {
    width: 34px;
    padding-left: 1px;
    border-left: 1px solid #c5c1b2;
}
.status-lamp svg {
    width: 10px;
    height: 13px;
}

/* taskbar */
.taskbar {
    flex: none;
    display: flex;
    height: 19px;
    background: linear-gradient(#4387f3, #2a63dc 15%, #245ad8 85%, #1c47b4);
    color: #fff;
}
.taskbar svg {
    width: 9px;
    height: 9px;
}
.start {
    display: flex;
    align-items: center;
    gap: 3px;
    width: 60px;
    padding-left: 7px;
    border-radius: 0 6px 6px 0;
    background: linear-gradient(#60af5f, #389238 20%, #3a973a 75%, #276f29);
    font-family: "Open Sans", sans-serif;
    font-size: 10px;
    font-style: italic;
    font-weight: bold;
}
.start svg {
    width: 12px;
    height: 12px;
}
.quick {
    display: flex;
    align-items: center;
    gap: 6px;
    width: 70px;
    padding-left: 8px;
}
.quick .more {
    margin: 0 4px 6px auto;
}
.tasks {
    flex: 1;
    display: flex;
    gap: 1px;
}
.tasks button {
    display: flex;
    align-items: center;
    gap: 2px;
    width: 99px;
    padding-left: 7px;
    border-radius: 2px;
    background: linear-gradient(#5b97fb, #3b7cf2 20%, #3876ea);
    color: #e4edfd;
    white-space: nowrap;
}
.tasks .active {
    background: linear-gradient(#173f9c, #1e50b8 30%, #2052bd);
}
.lang {
    width: 22px;
    line-height: 19px;
}
.tray {
    display: flex;
    align-items: center;
    gap: 2px;
    width: 70px;
    border-left: 1px solid #1042af;
    background: linear-gradient(#3db2f5, #1590e8 15%, #1490e9 85%, #0e6cc0);
}
.tray .expand {
    margin-left: -5px;
    border-radius: 50%;
    background-color: #3d9bea;
    border: 1px solid #9bd0f8;
}
.tray time {
    margin-left: 2px;
}
```
